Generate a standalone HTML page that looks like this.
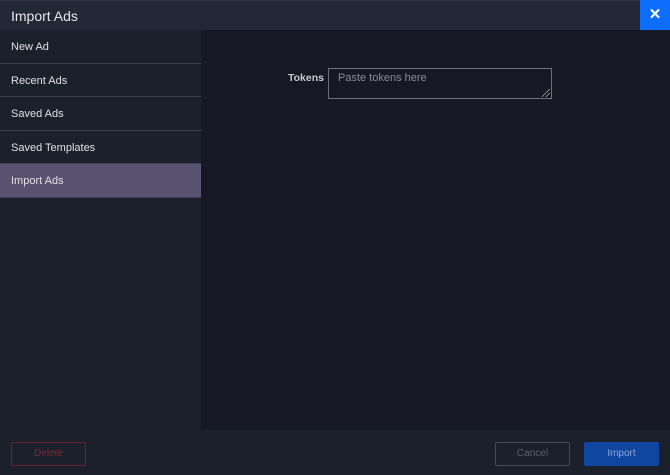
<!DOCTYPE html>
<html><head><style>
*{margin:0;padding:0;box-sizing:border-box}
body{width:670px;height:475px;background:#1c1f2c;font-family:"Liberation Sans",sans-serif;position:relative;overflow:hidden}
.hdr{position:absolute;left:0;top:0;width:670px;height:30px;background:#242736;border-top:1px solid #33374a}
.hdr .t{position:absolute;left:11px;top:7px;color:#e4e4ea;font-size:14px}
.x{position:absolute;right:0;top:0;width:30px;height:30px;background:#0d6efd;color:#fff;font-size:15px;font-weight:bold;text-align:center;line-height:30px}
.side{position:absolute;left:0;top:30px;width:201px;height:400px;background:#1c1f2c}
.it{height:33.5px;border-bottom:1px solid #3a3d4d;color:#e0e0e6;font-size:11px;padding-left:11px;line-height:34px}
.it.a{background:#595270;border-bottom:1px solid #3a3d4d}
.main{position:absolute;left:201px;top:30px;width:469px;height:400px;background:#161925}
.lab{position:absolute;left:288px;top:72px;color:#c8c8d0;font-size:10.5px;font-weight:bold}
.ta{position:absolute;left:328px;top:68px;width:224px;height:31px;border:1px solid #6c7080;background:#161925;color:#888b96;font-size:11px;padding:3px 9px}
.rz{position:absolute;right:1px;bottom:1px;width:8px;height:8px;background:linear-gradient(135deg,transparent 45%,#aaa 46%,#aaa 52%,transparent 53%,transparent 70%,#aaa 71%,#aaa 77%,transparent 78%)}
.btn{position:absolute;top:442px;height:24px;font-size:10px;text-align:center;line-height:22px;border-radius:2px}
</style></head><body>
<div class="hdr"><div class="t">Import Ads</div></div>
<div class="x">✕</div>
<div class="side">
<div class="it">New Ad</div><div class="it">Recent Ads</div><div class="it">Saved Ads</div><div class="it">Saved Templates</div><div class="it a">Import Ads</div>
</div>
<div class="main"></div>
<div class="lab">Tokens</div>
<div class="ta">Paste tokens here<div class="rz"></div></div>
<div class="btn" style="left:11px;width:75px;border:1px solid #6a2530;color:#7a2a35">Delete</div>
<div class="btn" style="left:495px;width:75px;border:1px solid #474a58;color:#5c5f6c">Cancel</div>
<div class="btn" style="left:584px;width:75px;background:#0f46a0;border:1px solid #0f46a0;color:#8ea6d4">Import</div>
</body></html>
